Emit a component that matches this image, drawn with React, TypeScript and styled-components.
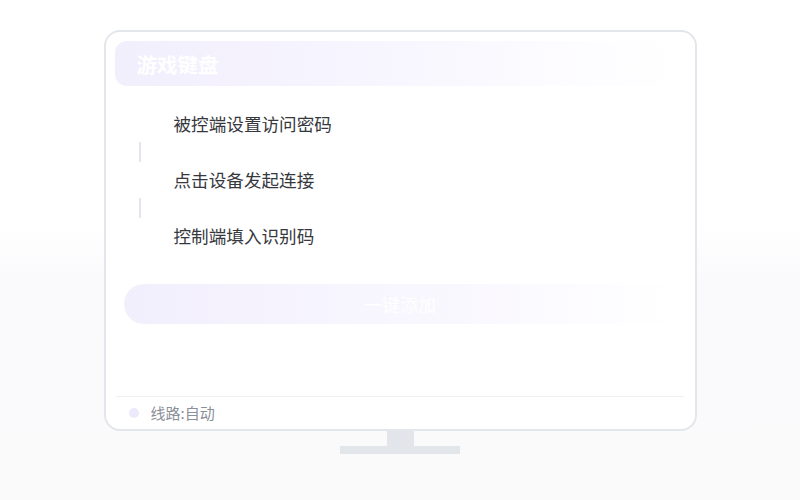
import React from "react";
import styled, { createGlobalStyle } from "styled-components";

const Global = createGlobalStyle`
  html, body { margin: 0; padding: 0; }
  body {
    width: 800px;
    height: 500px;
    overflow: hidden;
    background: linear-gradient(180deg, #ffffff 0%, #ffffff 44%, #fafafc 56%, #fafafb 100%);
    font-family: "Noto Sans CJK SC", "Noto Sans", sans-serif;
  }
`;

const Page = styled.div`
  width: 800px;
  height: 500px;
  display: flex;
  flex-direction: column;
  align-items: center;
  padding-top: 30px;
  box-sizing: border-box;
`;

const Screen = styled.div`
  width: 593px;
  height: 401px;
  box-sizing: border-box;
  border: 2px solid #e3e6ea;
  border-radius: 16px;
  background: #ffffff;
  padding: 9px 9px 5px;
  display: flex;
  flex-direction: column;
`;

const Header = styled.div`
  height: 45px;
  flex-shrink: 0;
  border-radius: 12px;
  background: linear-gradient(90deg, #f2effd 0%, #f7f5fe 45%, #fcfbff 75%, #ffffff 100%);
  display: flex;
  align-items: center;
  justify-content: space-between;
  padding: 0 28px 0 22px;
`;

const Title = styled.div`
  font-size: 20.5px;
  font-weight: 700;
  color: #ffffff;
  line-height: 24px;
`;

const HeaderAction = styled.div`
  font-size: 14px;
  color: #ffffff;
`;

const Steps = styled.div`
  display: flex;
  flex-direction: column;
  margin-top: 26px;
  padding-left: 24px;
`;

const StepRow = styled.div`
  height: 24px;
  display: flex;
  align-items: center;
  gap: 29px;
`;

const Marker = styled.span`
  width: 10px;
  height: 10px;
  margin-left: -4px;
  border-radius: 50%;
  background: #ffffff;
`;

const StepText = styled.span`
  font-size: 17.6px;
  line-height: 24px;
  color: #36383d;
`;

const Connector = styled.div`
  width: 2px;
  height: 20px;
  margin: 6px 0 6px 0;
  background: #e3e6ec;
`;

const AddButton = styled.button`
  margin: 36px 9px 0;
  height: 40px;
  flex-shrink: 0;
  border: none;
  border-radius: 20px;
  background: linear-gradient(90deg, #f2effd 0%, #f8f6fe 50%, #fcfbff 80%, #ffffff 100%);
  color: #ffffff;
  font-family: "Noto Sans CJK SC", sans-serif;
  font-size: 18px;
  padding: 0;
`;

const Spacer = styled.div`
  flex: 1;
`;

const Footer = styled.div`
  border-top: 1px solid #eef0f4;
  margin: 0 2px 0 1px;
  padding: 5px 0 0 13px;
  display: flex;
  align-items: center;
  gap: 12px;
`;

const Dot = styled.span`
  width: 10px;
  height: 10px;
  border-radius: 50%;
  background: #ece9fb;
`;

const FooterText = styled.span`
  font-size: 15px;
  line-height: 22px;
  color: #8b8f98;
`;

const Neck = styled.div`
  width: 27px;
  height: 15px;
  background: #e2e5e9;
`;

const Base = styled.div`
  width: 120px;
  height: 8px;
  background: #e2e5e9;
`;

const steps = ["被控端设置访问密码", "点击设备发起连接", "控制端填入识别码"];

export default function App() {
  return (
    <>
      <Global />
      <Page>
        <Screen>
          <Header>
            <Title>游戏键盘</Title>
            <HeaderAction>收起</HeaderAction>
          </Header>
          <Steps>
            {steps.map((s, i) => (
              <React.Fragment key={s}>
                {i > 0 && <Connector />}
                <StepRow>
                  <Marker />
                  <StepText>{s}</StepText>
                </StepRow>
              </React.Fragment>
            ))}
          </Steps>
          <AddButton>一键添加</AddButton>
          <Spacer />
          <Footer>
            <Dot />
            <FooterText>线路:自动</FooterText>
          </Footer>
        </Screen>
        <Neck />
        <Base />
      </Page>
    </>
  );
}
